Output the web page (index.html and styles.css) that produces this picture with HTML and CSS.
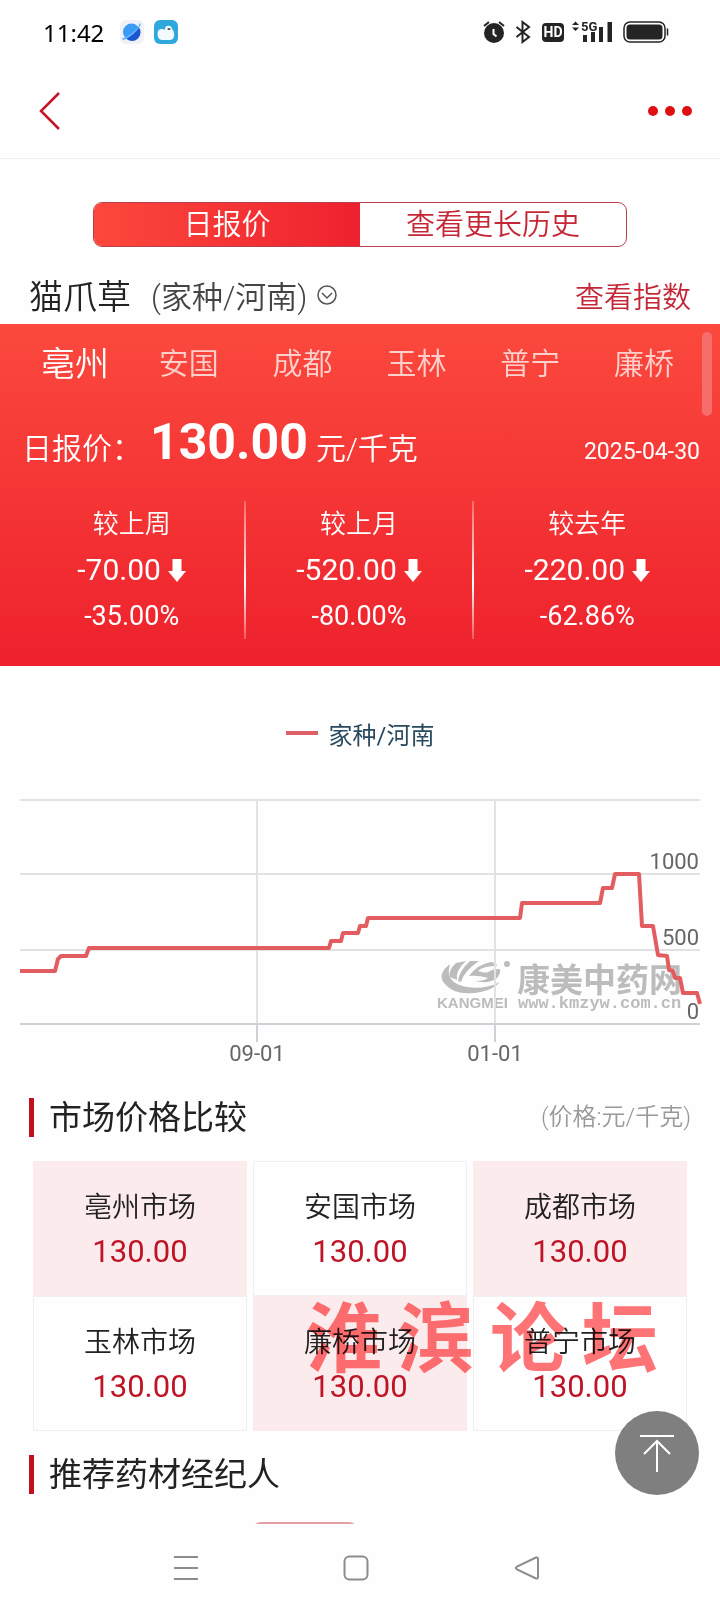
FILE: index.html
```html
<!DOCTYPE html>
<html lang="zh-CN">
<head>
  <meta charset="UTF-8">
  <meta name="viewport" content="width=device-width, initial-scale=1">
  <title>猫爪草 日报价</title>
  <link rel="stylesheet" href="styles.css">
</head>
<body>
  <!-- Status bar -->
  <div class="status-bar">
    <span class="clock">11:42</span>
    <svg class="app-icon planet" viewBox="0 0 24 24" aria-hidden="true">
      <rect width="24" height="24" rx="6" fill="#f0f2f8"/>
      <circle cx="11.500" cy="12" r="8.500" fill="#3b9cf5"/>
      <path d="M18.500 7A8.500 8.500 0 0 1 6 18.500Q14 15 18.500 7Z" fill="#1c55cf"/>
      <path d="M2.500 17.500Q1.500 21 5 19.500Q14 15 20 6.500Q22 2.500 18 4Q20 4 18.500 6.500Q12 14.500 5 17.500Q3 18.300 2.500 17.500Z" fill="#5eb5fa"/>
    </svg>
    <svg class="app-icon" viewBox="0 0 24 24" aria-hidden="true">
      <rect width="24" height="24" rx="6" fill="#2fa9dc"/>
      <path d="M8 20Q3.500 19.500 3.500 14Q3.500 9 8 9Q10 9 11 10Q10.500 6 14.500 5.800Q17.500 5.800 18 9Q20.500 11 20.300 14.500Q20 20 15.500 20Z" fill="#f4fbff"/>
      <path d="M13 9Q15 7.500 17 9L15 10Z" fill="#222"/>
    </svg>
    <div class="status-icons">
      <svg width="22" height="24" viewBox="0 0 22 24" aria-hidden="true">
        <circle cx="11" cy="13" r="10" fill="#242424"/>
        <path d="M1 6L6 2M16 2L21 6" stroke="#242424" stroke-width="2"/>
        <path d="M10.500 9V14L13.500 16.500" fill="none" stroke="#fff" stroke-width="2"/>
      </svg>
      <svg class="bluetooth" width="16" height="24" viewBox="0 0 16 24" aria-hidden="true">
        <path d="M1.500 7L14 17L7.500 22V2L14 7L1.500 17" fill="none" stroke="#242424" stroke-width="2"/>
      </svg>
      <span class="hd">HD</span>
      <svg class="signal" width="41" height="24" viewBox="0 0 41 24" aria-hidden="true">
        <path d="M0 5L3.500 1.500L7 5ZM0 7.500H7L3.500 11Z" fill="#242424"/>
        <path d="M11 15H15V22H11ZM19 12H23V22H19ZM27 7H31V22H27ZM35.500 2H40V22H35.500Z" fill="#242424"/>
        <text x="9" y="11" class="signal-text">5G</text>
      </svg>
      <svg width="46" height="22" viewBox="0 0 46 22" aria-hidden="true">
        <rect x="1" y="1" width="41" height="20" rx="6" fill="none" stroke="#242424" stroke-width="1.500"/>
        <rect x="3.500" y="3.500" width="36" height="15" rx="3.500" fill="#242424"/>
        <path d="M44.500 7.500V14.500" stroke="#242424" stroke-width="1.500"/>
      </svg>
    </div>
  </div>

  <!-- Page header -->
  <header class="top-bar">
    <button class="icon-button" aria-label="返回">
      <svg width="22" height="40" viewBox="0 0 22 40"><path d="M21 2L3 20L21 38" fill="none" stroke="#c41525" stroke-width="2.500"/></svg>
    </button>
    <button class="icon-button" aria-label="更多">
      <svg width="46" height="12" viewBox="0 0 46 12" fill="#df0f12"><circle cx="6" cy="6" r="5"/><circle cx="23" cy="6" r="5"/><circle cx="40" cy="6" r="5"/></svg>
    </button>
  </header>

  <main>
    <div class="segmented">
      <button class="segment active">日报价</button>
      <button class="segment">查看更长历史</button>
    </div>

    <div class="title-row">
      <h1>猫爪草</h1>
      <button class="spec">(家种/河南)
        <svg width="20" height="20" viewBox="0 0 20 20" fill="none" stroke="#555" stroke-width="1.500"><circle cx="10" cy="10" r="9"/><path d="M5 8L10 13L15 8"/></svg>
      </button>
      <a class="index-link" href="#">查看指数</a>
    </div>

    <!-- Daily price -->
    <section class="price-panel">
      <nav class="city-tabs">
        <button class="city active">亳州</button>
        <button class="city">安国</button>
        <button class="city">成都</button>
        <button class="city">玉林</button>
        <button class="city">普宁</button>
        <button class="city">廉桥</button>
      </nav>
      <span class="scroll-thumb"></span>
      <div class="price-row">
        <span class="price-label">日报价：</span>
        <strong class="price">130.00</strong>
        <span class="unit">元/千克</span>
        <time class="date" datetime="2025-04-30">2025-04-30</time>
      </div>
      <div class="stats">
        <div class="stat">
          <p class="stat-name">较上周</p>
          <p class="stat-value">-70.00 <svg class="down" viewBox="0 0 18 23"><path d="M4.500 0H13.500V12H18L9 23L0 12H4.500Z"/></svg></p>
          <p class="stat-percent">-35.00%</p>
        </div>
        <div class="stat">
          <p class="stat-name">较上月</p>
          <p class="stat-value">-520.00 <svg class="down" viewBox="0 0 18 23"><path d="M4.500 0H13.500V12H18L9 23L0 12H4.500Z"/></svg></p>
          <p class="stat-percent">-80.00%</p>
        </div>
        <div class="stat">
          <p class="stat-name">较去年</p>
          <p class="stat-value">-220.00 <svg class="down" viewBox="0 0 18 23"><path d="M4.500 0H13.500V12H18L9 23L0 12H4.500Z"/></svg></p>
          <p class="stat-percent">-62.86%</p>
        </div>
      </div>
    </section>

    <!-- Price chart -->
    <section class="chart">
      <div class="legend"><span class="legend-line"></span>家种/河南</div>
      <svg class="plot" viewBox="0 0 720 274">
        <!-- logo -->
        <g fill="#bcbcbc">
          <path d="M450 164Q437 174 444 183Q455 197 481 192Q494 189 500 182Q484 190 467 187Q444 183 450 164Z"/>
          <path d="M456 163L466 161Q455 171 457 180L450 177Q448 170 456 163Z"/>
          <path d="M470 161L479 161Q464 171 461 182L458 181Q459 171 470 161Z"/>
          <path d="M469 176Q478 164 491 162Q497 163 497 166Q483 166 478 171Q487 174 490 171Q492 169 500 169Q501 174 496 179Q488 184 475 181Q485 181 488 178Q478 175 469 176Z"/>
          <circle cx="507" cy="164" r="3"/>
          <text class="logo-en" x="437" y="208">KANGMEI</text>
          <text class="logo-cn" x="517" y="192">康美中药网</text>
          <text class="logo-url" x="518" y="208">www.kmzyw.com.cn</text>
        </g>
        <path class="grid-line" d="M20 0H700M20 74H700M20 150H700M257 0V224M495 0V224"/>
        <path class="axis-line" d="M20 224H700M257 224V242M495 224V242"/>
        <polyline class="series" points="20,171 55,171 58,159 61,156 86,156 89,148 329,148 331,141 341,141 343,133 358,133 360,126 366,126 368,118 520,118 522,103 600,103 603,88 612,88 615,74 639,74 642,126 653,126 658,155 667,156 669,170 673,171 675,178 680,178 683,193 697,193 700,204"/>
        <g class="axis-text">
          <text x="699" y="69" text-anchor="end">1000</text>
          <text x="699" y="145" text-anchor="end">500</text>
          <text x="699" y="219" text-anchor="end">0</text>
          <text x="257" y="261" text-anchor="middle">09-01</text>
          <text x="495" y="261" text-anchor="middle">01-01</text>
        </g>
      </svg>
    </section>

    <!-- Market comparison -->
    <section class="markets">
      <div class="section-head">
        <h2>市场价格比较</h2>
        <span class="note">(价格:元/千克)</span>
      </div>
      <div class="market-grid">
        <div class="market tinted"><p>亳州市场</p><p class="market-price">130.00</p></div>
        <div class="market"><p>安国市场</p><p class="market-price">130.00</p></div>
        <div class="market tinted"><p>成都市场</p><p class="market-price">130.00</p></div>
        <div class="market"><p>玉林市场</p><p class="market-price">130.00</p></div>
        <div class="market tinted"><p>廉桥市场</p><p class="market-price">130.00</p></div>
        <div class="market"><p>普宁市场</p><p class="market-price">130.00</p></div>
        <div class="watermark"><span>淮</span><span>滨</span><span>论</span><span>坛</span></div>
      </div>
    </section>

    <!-- Brokers -->
    <section class="brokers">
      <div class="section-head">
        <h2>推荐药材经纪人</h2>
      </div>
      <div class="broker-badge"></div>
    </section>

    <button class="back-top" aria-label="回到顶部">
      <svg width="36" height="38" viewBox="0 0 36 38" fill="none" stroke="#fff" stroke-width="2"><path d="M1 2H35M18 7V38M5 20L18 7L31 20"/></svg>
    </button>
  </main>

  <!-- System navigation -->
  <nav class="system-nav">
    <button class="icon-button" aria-label="菜单"><svg width="26" height="26" viewBox="0 0 26 26"><path d="M1 2H25M1 13H25M1 24H25"/></svg></button>
    <button class="icon-button" aria-label="主页"><svg width="26" height="26" viewBox="0 0 26 26"><rect x="1.500" y="1.500" width="23" height="23" rx="5"/></svg></button>
    <button class="icon-button" aria-label="后退"><svg width="26" height="26" viewBox="0 0 26 26"><path d="M22 2.500L3 11.500Q1 13 3 14.500L22 23.500Q24 24 24 22V4Q24 2 22 2.500Z"/></svg></button>
  </nav>
</body>
</html>
```
FILE: styles.css
```css
* {
  box-sizing: border-box;
}

body {
  margin: 0;
  height: 100vh;
  display: flex;
  flex-direction: column;
  background: #fefefe;
  color: #222;
  font-family: Roboto, "Noto Sans CJK SC", sans-serif;
  font-weight: 350;
}

h1, h2, p {
  margin: 0;
  font-weight: 350;
}

button {
  border: none;
  background: none;
  padding: 0;
  color: inherit;
  font: inherit;
  cursor: pointer;
}

svg {
  flex: none;
}

.status-bar {
  flex: none;
  display: flex;
  align-items: center;
  height: 64px;
  padding: 0 51px 0 43px;
}

.clock {
  font-family: "Noto Sans", sans-serif;
  font-size: 24px;
  font-weight: 400;
  color: #000;
}

.app-icon {
  width: 24px;
  height: 24px;
  margin-left: 10px;
}

.app-icon.planet {
  margin-left: 16px;
}

.status-icons {
  display: flex;
  align-items: center;
  margin-left: auto;
}

.bluetooth {
  margin-left: 10px;
}

.hd {
  width: 22px;
  margin-left: 11px;
  border-radius: 4px;
  background: #242424;
  color: #fff;
  font-size: 14px;
  font-weight: 700;
  line-height: 19px;
  text-align: center;
}

.signal {
  margin: 0 10px 0 8px;
}

.signal-text {
  font-size: 13px;
  font-weight: 700;
  fill: #242424;
  stroke: #fff;
  stroke-width: 2px;
  paint-order: stroke;
}

.top-bar {
  flex: none;
  display: flex;
  align-items: center;
  justify-content: space-between;
  height: 95px;
  padding: 0 27px 0 38px;
  border-bottom: 1px solid #f0f0f0;
}

.icon-button {
  display: flex;
}

main {
  position: relative;
  flex: 1;
  min-height: 0;
  overflow: hidden;
}

.segmented {
  display: flex;
  height: 45px;
  margin: 43px 93px 0;
  border: 1px solid #b8404f;
  border-radius: 9px;
  overflow: hidden;
}

.segment {
  flex: 1;
  padding-top: 2px;
  color: #c42836;
  font-size: 29px;
  line-height: 41px;
}

.segment.active {
  background: linear-gradient(to right, #fc483c, #ee212e);
  color: #fff;
}

.title-row {
  display: flex;
  align-items: center;
  height: 77px;
  padding: 18px 29px 0;
}

h1 {
  font-size: 34px;
}

.spec {
  display: flex;
  align-items: center;
  gap: 10px;
  margin-left: 20px;
  color: #444;
  font-size: 31px;
}

.index-link {
  margin-left: auto;
  color: #c42836;
  font-size: 29px;
  text-decoration: none;
}

.price-panel {
  position: relative;
  padding-bottom: 27px;
  background: linear-gradient(#fb493d, #ee212d);
  color: #fff;
}

.city-tabs {
  display: flex;
  height: 80px;
  padding: 0 19px 6px 18px;
}

.city {
  flex: 1;
  color: #fdd0cc;
  font-size: 30px;
}

.city.active {
  color: #fff;
  font-size: 34px;
}

.scroll-thumb {
  position: absolute;
  top: 8px;
  right: 8px;
  width: 10px;
  height: 84px;
  border-radius: 5px;
  background: #f56e6c;
}

.price-row {
  display: flex;
  align-items: baseline;
  height: 97px;
  padding: 8px 20px 0 22px;
  font-size: 30px;
  line-height: 60px;
}

.price {
  margin-left: 8px;
  font-size: 50px;
  font-weight: 700;
}

.unit {
  margin-left: 8px;
}

.date {
  margin-left: auto;
  font-size: 23px;
  font-weight: 400;
}

.stats {
  display: grid;
  grid-template-columns: repeat(3, 1fr);
  padding: 0 19px;
  line-height: 46px;
  text-align: center;
}

.stat:not(:last-child) {
  border-right: 2px solid;
  border-image: linear-gradient(#f66, #fff 60%, #f55) 1;
}

.stat-name {
  font-size: 26px;
}

.stat-value {
  display: flex;
  align-items: center;
  justify-content: center;
  gap: 7px;
  font-size: 30px;
  font-weight: 400;
}

.stat-percent {
  font-size: 27px;
  font-weight: 400;
}

.down {
  width: 18px;
  height: 23px;
  fill: #fff;
}

.legend {
  display: flex;
  align-items: center;
  justify-content: center;
  gap: 11px;
  height: 134px;
  color: #2a4a60;
  font-size: 24px;
  font-weight: 400;
}

.legend-line {
  width: 32px;
  height: 4px;
  background: #dc6066;
}

.plot {
  display: block;
  width: 100%;
  overflow: visible;
}

.grid-line,
.axis-line,
.series {
  fill: none;
  stroke: #e2e2e4;
  stroke-width: 2px;
}

.axis-line {
  stroke: #ccd2d8;
}

.series {
  stroke: #e35d60;
  stroke-width: 4px;
  stroke-linejoin: round;
}

.axis-text {
  fill: #666;
  font-size: 22px;
  font-weight: 400;
}

.logo-en {
  font: 700 15px "Liberation Sans", sans-serif;
}

.logo-cn {
  font-size: 33px;
  font-weight: 700;
}

.logo-url {
  font: 700 17px "Liberation Mono", monospace;
}

.section-head {
  display: flex;
  align-items: center;
  justify-content: space-between;
  height: 39px;
  margin: 24px 29px;
  padding: 0 0 6px 15px;
  border-left: 5px solid #c21020;
}

h2 {
  font-size: 33px;
  font-weight: 400;
}

.note {
  color: #999;
  font-size: 24px;
}

.market-grid {
  position: relative;
  display: grid;
  grid-template-columns: repeat(3, 1fr);
  column-gap: 6px;
  padding: 0 33px;
}

.market {
  height: 135px;
  padding-top: 24px;
  border: 1px solid #f0f0f2;
  font-size: 28px;
  line-height: 44px;
  text-align: center;
}

.market.tinted {
  border-color: #fcebec;
  background: #fcebec;
}

.market .market-price {
  color: #be1426;
  font-size: 31px;
  font-weight: 400;
}

.watermark {
  position: absolute;
  top: 135px;
  right: 62px;
  display: flex;
  justify-content: space-between;
  width: 352px;
  color: #ff7476;
  font-size: 76px;
  font-weight: 700;
  line-height: 88px;
  mix-blend-mode: multiply;
  pointer-events: none;
}

.broker-badge {
  width: 106px;
  height: 48px;
  margin: 28px 0 0 35%;
  border: 2px solid #e2a0a6;
  border-radius: 9px;
}

.back-top {
  position: absolute;
  right: 21px;
  bottom: 29px;
  display: flex;
  align-items: center;
  justify-content: center;
  width: 84px;
  height: 84px;
  border-radius: 50%;
  background: #7f7f7f;
}

.system-nav {
  flex: none;
  display: flex;
  align-items: center;
  justify-content: space-around;
  height: 88px;
  padding: 0 15% 0 14%;
}

.system-nav svg {
  fill: none;
  stroke: #8c8c8c;
  stroke-width: 2px;
}
```
